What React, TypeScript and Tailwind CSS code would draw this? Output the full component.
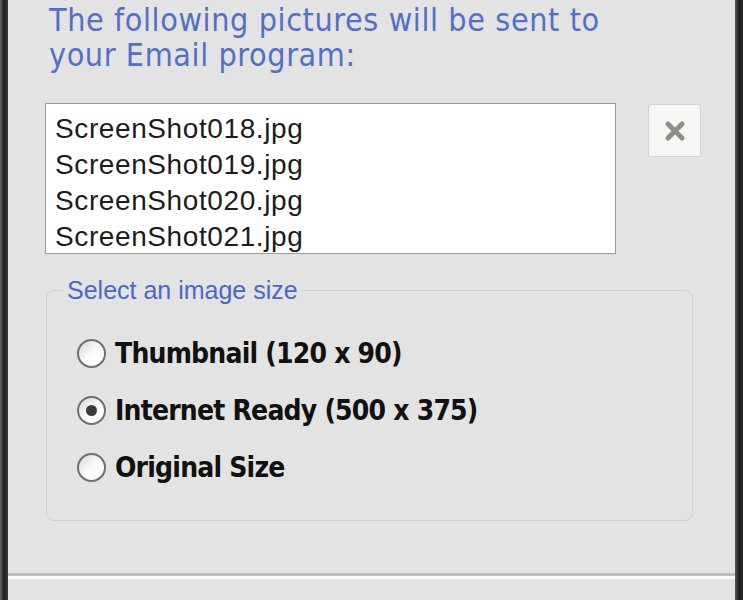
import React from "react";

const files = ["ScreenShot018.jpg", "ScreenShot019.jpg", "ScreenShot020.jpg", "ScreenShot021.jpg"];

const sizes = [
  { label: "Thumbnail (120 x 90)", checked: false },
  { label: "Internet Ready (500 x 375)", checked: true },
  { label: "Original Size", checked: false },
];

function Radio({ checked }: { checked: boolean }) {
  return (
    <span className="w-[29px] h-[29px] rounded-full border-[2px] border-[#6f6f6f] bg-gradient-to-br from-[#d6d6d6] via-[#fafafa] to-[#ffffff] flex items-center justify-center shrink-0">
      {checked && <span className="w-[11px] h-[11px] rounded-full bg-[#3a3a3a]" />}
    </span>
  );
}

export default function App() {
  return (
    <div className="w-[743px] h-[600px] flex bg-[#e3e3e3] overflow-hidden">
      <div className="w-[8px] h-full bg-gradient-to-r from-[#6a6a6a] via-[#1e1e1e] to-[#3c3c3c]" />
      <div className="flex-1 flex flex-col">
        <div className="h-[573px] flex flex-col">
          <h1
            className="ml-[41px] mt-[3px] text-[#5470c6] text-[32px] leading-[35px] tracking-[0.6px]"
            style={{ fontFamily: "'DejaVu Sans Condensed', 'DejaVu Sans', sans-serif" }}
          >
            The following pictures will be sent to
            <br />
            your Email program:
          </h1>

          <div className="flex items-start mt-[30px]">
            <div
              className="ml-[37px] w-[571px] h-[151px] bg-white border border-[#9a9a9a] pt-[7px] pl-[9px] text-[#1c1c1c] text-[28px] leading-[36px] tracking-[0.6px]"
              style={{ fontFamily: "'Liberation Sans', Arial, sans-serif" }}
            >
              {files.map(f => (
                <div key={f}>{f}</div>
              ))}
            </div>
            <button className="ml-[32px] mt-[1px] w-[53px] h-[53px] rounded-[3px] border border-[#d2d2d2] bg-[#f6f6f6] flex items-center justify-center">
              <svg width="30" height="30" viewBox="0 0 30 30">
                <path d="M8 8 L22 22 M22 8 L8 22" stroke="#8c9183" strokeWidth="5" strokeLinecap="round" />
              </svg>
            </button>
          </div>

          <div className="relative ml-[38px] mt-[36px] w-[647px] h-[231px] rounded-[8px] border border-[#d0d0d0]">
            <span
              className="absolute left-[16px] -top-[17px] px-[4px] bg-[#e3e3e3] text-[#4a68c9] text-[25px] leading-[32px]"
              style={{ fontFamily: "'Liberation Sans', Arial, sans-serif" }}
            >
              Select an image size
            </span>
            <div className="flex flex-col gap-[28px] pl-[30px] pt-[48px]">
              {sizes.map(s => (
                <div key={s.label} className="flex items-center gap-[9px] h-[29px]">
                  <Radio checked={s.checked} />
                  <span
                    className="text-[#111] text-[28px] font-bold leading-[29px] tracking-[-0.8px]"
                    style={{ fontFamily: "'DejaVu Sans Condensed', 'DejaVu Sans', sans-serif" }}
                  >
                    {s.label}
                  </span>
                </div>
              ))}
            </div>
          </div>
        </div>
        <div className="h-[3px] bg-[#bdbdbd]" />
        <div className="h-[3px] bg-[#fafafa]" />
        <div className="flex-1 bg-[#e3e3e3]" />
      </div>
      <div className="w-[8px] h-full bg-gradient-to-r from-[#5a5a5a] via-[#1c1c1c] to-[#2a2a2a]" />
    </div>
  );
}
